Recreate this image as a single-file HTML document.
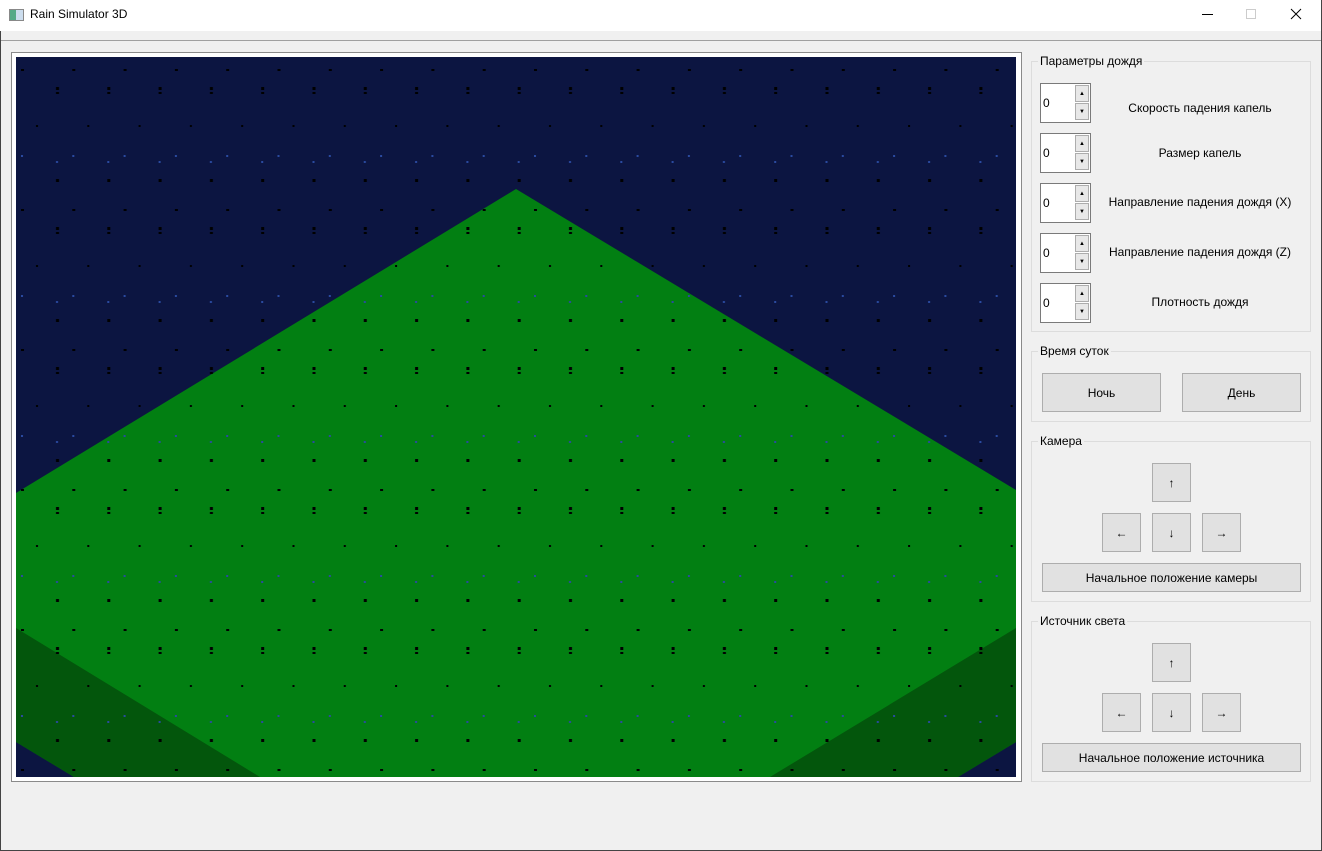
<!DOCTYPE html>
<html><head><meta charset="utf-8"><style>
*{box-sizing:border-box;margin:0;padding:0}
body{width:1322px;height:851px;background:#f0f0f0;font-family:"Segoe UI","Liberation Sans","DejaVu Sans",sans-serif;font-size:12px;color:#000;position:relative;overflow:hidden}
.a{position:absolute}
.title{left:0;top:0;width:1322px;height:31px;background:#fff}
.gb{position:absolute;border:1px solid #dcdcdc}
.gl{position:absolute;background:#f0f0f0;padding:0 2px;font-size:12px;line-height:14px}
.btn{position:absolute;background:#e1e1e1;border:1px solid #adadad;display:flex;align-items:center;justify-content:center;font-size:12px}
.spin{position:absolute;width:51px;height:40px;background:#fff;border:1px solid #7a7a7a}
.spin span{position:absolute;left:2px;top:12px;font-size:12px}
.sb{position:absolute;left:34px;width:14px;height:17px;background:#e8e8e8;border:1px solid #adadad;font-size:6px;display:flex;align-items:center;justify-content:center}
.lbl{position:absolute;font-size:12px;text-align:center;width:210px}
</style></head><body>
<div class="a title"></div>
<div class="a" style="left:9px;top:9px;width:15px;height:12px;border:1px solid #888;background:linear-gradient(90deg,#5a8 0 45%,#cde 45%)"></div>
<div class="a" style="left:30px;top:7px;font-size:12px">Rain Simulator 3D</div>
<div class="a" style="left:1202px;top:14px;width:11px;height:1px;background:#000"></div>
<div class="a" style="left:1246px;top:9px;width:10px;height:10px;border:1px solid #ccc"></div>
<svg class="a" style="left:1290px;top:8px" width="12" height="12"><path d="M1 1L11 11M11 1L1 11" stroke="#000" stroke-width="1"/></svg>
<div class="a" style="left:0;top:31px;width:1322px;height:10px;background:#f0f0f0;border-bottom:1px solid #a0a0a0"></div>
<div class="a" style="left:0;top:31px;width:1px;height:820px;background:#444"></div>
<div class="a" style="left:1321px;top:0;width:1px;height:851px;background:#444"></div>
<div class="a" style="left:11px;top:52px;width:1011px;height:730px;border:1px solid #8a8a8a;background:#fff"></div>
<svg class="a" style="left:16px;top:57px" width="1000" height="720" viewBox="0 0 1000 720">
<defs><pattern id="r" x="0" y="0" width="51.3" height="140" patternUnits="userSpaceOnUse">
<rect x="5" y="12" width="3" height="2" fill="#000"/><rect x="5" y="98" width="2" height="2" fill="#2a4aa0"/>
<rect x="40" y="30" width="3" height="3" fill="#000"/><rect x="40" y="35" width="3" height="2" fill="#000"/><rect x="40" y="104" width="2" height="2" fill="#2a4aa0"/>
<rect x="40" y="122" width="3" height="3" fill="#000"/><rect x="20" y="68" width="2" height="2" fill="#000"/></pattern></defs>
<rect width="1000" height="720" fill="#0c1541"/>
<polygon points="500,132 1000,433 1000,685 942,720 58,720 0,685 0,436" fill="#027f12"/>
<polygon points="0,571 244,720 58,720 0,685" fill="#03560c"/>
<polygon points="1000,571 754,720 942,720 1000,685" fill="#03560c"/>
<rect width="1000" height="720" fill="url(#r)"/>
</svg>
<div class="gb" style="left:1031px;top:61px;width:280px;height:271px"></div><div class="gl" style="left:1038px;top:54px">Параметры дождя</div>
<div class="spin" style="left:1040px;top:83px"><span>0</span><div class="sb" style="top:1px">▲</div><div class="sb" style="top:19px">▼</div></div>
<div class="lbl" style="left:1095px;top:101px">Скорость падения капель</div>
<div class="spin" style="left:1040px;top:133px"><span>0</span><div class="sb" style="top:1px">▲</div><div class="sb" style="top:19px">▼</div></div>
<div class="lbl" style="left:1095px;top:146px">Размер капель</div>
<div class="spin" style="left:1040px;top:183px"><span>0</span><div class="sb" style="top:1px">▲</div><div class="sb" style="top:19px">▼</div></div>
<div class="lbl" style="left:1095px;top:195px">Направление падения дождя (X)</div>
<div class="spin" style="left:1040px;top:233px"><span>0</span><div class="sb" style="top:1px">▲</div><div class="sb" style="top:19px">▼</div></div>
<div class="lbl" style="left:1095px;top:245px">Направление падения дождя (Z)</div>
<div class="spin" style="left:1040px;top:283px"><span>0</span><div class="sb" style="top:1px">▲</div><div class="sb" style="top:19px">▼</div></div>
<div class="lbl" style="left:1095px;top:295px">Плотность дождя</div>
<div class="gb" style="left:1031px;top:351px;width:280px;height:71px"></div><div class="gl" style="left:1038px;top:344px">Время суток</div>
<div class="btn" style="left:1042px;top:373px;width:119px;height:39px">Ночь</div>
<div class="btn" style="left:1182px;top:373px;width:119px;height:39px">День</div>
<div class="gb" style="left:1031px;top:441px;width:280px;height:161px"></div><div class="gl" style="left:1038px;top:434px">Камера</div>
<div class="btn" style="left:1152px;top:463px;width:39px;height:39px">↑</div>
<div class="btn" style="left:1102px;top:513px;width:39px;height:39px">←</div>
<div class="btn" style="left:1152px;top:513px;width:39px;height:39px">↓</div>
<div class="btn" style="left:1202px;top:513px;width:39px;height:39px">→</div>
<div class="btn" style="left:1042px;top:563px;width:259px;height:29px">Начальное положение камеры</div>
<div class="gb" style="left:1031px;top:621px;width:280px;height:161px"></div><div class="gl" style="left:1038px;top:614px">Источник света</div>
<div class="btn" style="left:1152px;top:643px;width:39px;height:39px">↑</div>
<div class="btn" style="left:1102px;top:693px;width:39px;height:39px">←</div>
<div class="btn" style="left:1152px;top:693px;width:39px;height:39px">↓</div>
<div class="btn" style="left:1202px;top:693px;width:39px;height:39px">→</div>
<div class="btn" style="left:1042px;top:743px;width:259px;height:29px">Начальное положение источника</div>
<div class="a" style="left:0;top:850px;width:1322px;height:1px;background:#444"></div>
</body></html>
